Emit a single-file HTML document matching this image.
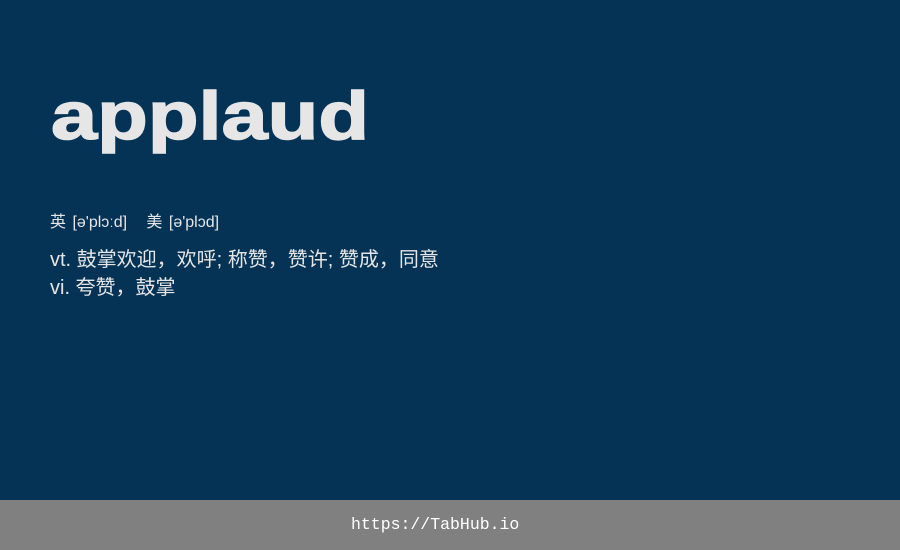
<!DOCTYPE html>
<html><head><meta charset="utf-8"><style>
html,body{margin:0;padding:0;width:900px;height:550px;overflow:hidden;background:#043356;}
.t{position:absolute;left:51px;top:82px;font:bold 68px/1 "Liberation Sans",Arial,sans-serif;color:#e6e6e6;transform:scaleX(1.22);transform-origin:0 0;-webkit-text-stroke:1.5px #e6e6e6;}
.ph{position:absolute;left:50px;top:213px;font:16px/1.2 "Liberation Sans","Noto Sans CJK SC",sans-serif;color:#e6e6e6;word-spacing:2px;}
.d{position:absolute;left:50px;top:246px;font:20px/28px "Liberation Sans","Noto Sans CJK SC",sans-serif;color:#e6e6e6;}
.f{position:absolute;left:0;top:500px;width:900px;height:50px;background:#808080;}
.f span{position:absolute;left:351px;top:0;color:#fff;font:16.5px/50px "Liberation Mono","DejaVu Sans Mono",monospace;}
</style></head><body>
<div class="t">applaud</div>
<div class="ph">英 [ə'plɔːd]&nbsp;&nbsp;&nbsp;美 [ə'plɔd]</div>
<div class="d">vt. 鼓掌欢迎，欢呼; 称赞，赞许; 赞成，同意<br>vi. 夸赞，鼓掌</div>
<div class="f"><span>https://TabHub.io</span></div>
</body></html>
